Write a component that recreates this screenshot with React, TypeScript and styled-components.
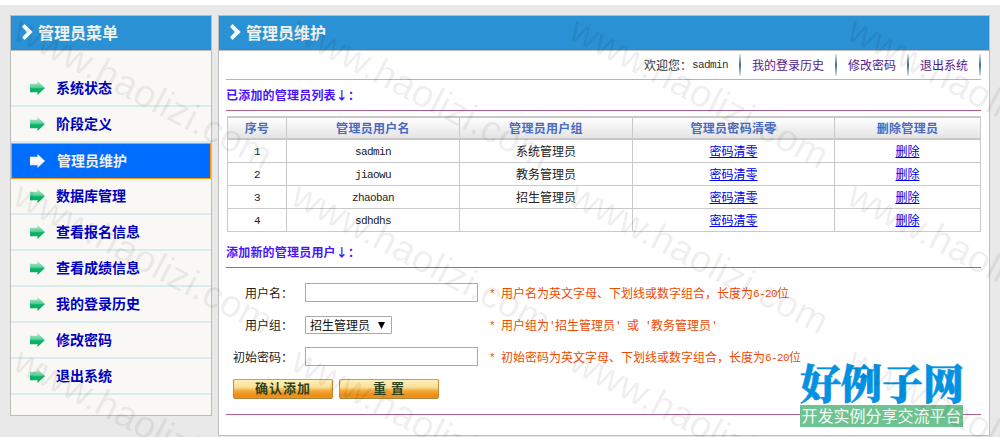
import React from 'react';
import styled, { createGlobalStyle, css } from 'styled-components';

const GlobalStyle = createGlobalStyle`
  * { box-sizing: border-box; }
  body {
    margin: 0;
    background: #fff;
    color: #222;
    font: 12px/16px "Noto Sans CJK SC", sans-serif;
    overflow: hidden;
  }
`;

const Page = styled.div`
  position: relative;
  width: 1000px;
  height: 437px;
  padding-top: 5px;
  overflow: hidden;
`;

const Body = styled.div`
  display: flex;
  align-items: flex-start;
  gap: 6px;
  height: 432px;
  padding: 10px;
  background: #e9e9e9;
`;

const Panel = styled.section<{ $width: number; $height: number; $bg: string }>`
  flex: none;
  width: ${(p) => p.$width}px;
  height: ${(p) => p.$height}px;
  border: 1px solid #bcbcbc;
  background: ${(p) => p.$bg};
`;

const PanelHeader = styled.h2`
  display: flex;
  align-items: center;
  gap: 5px;
  height: 35px;
  margin: 0;
  padding: 0 0 2px 11px;
  border-bottom: 1px solid #bcbcbc;
  background: #2a91d4;
  color: #f1f1ee;
  font-size: 16px;
  font-weight: 700;
`;

const Menu = styled.ul`
  margin: 0;
  padding: 20px 0 0;
  list-style: none;
`;

const MenuItem = styled.li<{ $active?: boolean }>`
  display: flex;
  align-items: center;
  gap: 11px;
  height: 36px;
  padding-left: 19px;
  border-bottom: 2px solid #d9eced;
  color: #0000bf;
  font-size: 14px;
  font-weight: 700;
  ${(p) =>
    p.$active &&
    css`
      padding: 0 0 0 18px;
      gap: 12px;
      border: 1px solid #ff9912;
      background: #006dfe;
      color: #f1f1f1;
    `}
`;

const MenuText = styled.span`
  padding-bottom: 2px;
`;

const Content = styled.div`
  padding: 0 8px 0 7px;
`;

const TopBar = styled.nav`
  display: flex;
  justify-content: flex-end;
  height: 29px;
  padding-top: 3px;
  border-bottom: 1px solid #dcbb2c;
`;

const TopItem = styled.span<{ $link?: boolean }>`
  display: flex;
  height: 22px;
  padding: 3px 0 0 11px;
  color: ${(p) => (p.$link ? '#551a8b' : '#333')};
  &::after {
    content: '';
    width: 2px;
    height: 22px;
    margin: -3px 0 0 11px;
    background: linear-gradient(#dce8ef, #3b7192 50%, #dce8ef);
  }
`;

const Mono = styled.span`
  font-family: "Liberation Mono", monospace;
  font-size: 11px;
  line-height: 1;
  letter-spacing: -0.6px;
  vertical-align: 1px;
  white-space: pre;
`;

const Account = styled(Mono)`
  line-height: 16px;
`;

const Heading = styled.h3<{ $height: number; $top: number }>`
  height: ${(p) => p.$height}px;
  margin: 0;
  padding-top: ${(p) => p.$top}px;
  border-bottom: 1px solid #b16088;
  color: #4a14ff;
  font-size: 12px;
  font-weight: 700;
  line-height: 16px;
  letter-spacing: 0.2px;
`;

const Grid = styled.div`
  margin: 5px 0 0 1px;
  border-left: 1px solid #c9c9c9;
`;

const Row = styled.div<{ $head?: boolean }>`
  display: grid;
  grid-template-columns: 59px 173px 173px 202px 146px;
  height: 23px;
  border-bottom: 1px solid #c9c9c9;
  text-align: center;
  line-height: 22px;
  ${(p) =>
    p.$head &&
    css`
      height: 24px;
      border-top: 2px solid #c9c9c9;
      border-bottom-width: 2px;
      background: linear-gradient(#fff, #e5e3e4);
      color: #486ac0;
      font-weight: 700;
      line-height: 20px;
      letter-spacing: 0.3px;
    `}
`;

const Cell = styled.div`
  border-right: 1px solid #c9c9c9;
`;

const Link = styled.a`
  color: #0000ee;
  text-decoration: underline;
`;

const Form = styled.form`
  height: 147px;
  padding: 9px 0 0 7px;
  border-bottom: 1px solid #b16088;
`;

const Field = styled.div`
  display: flex;
  align-items: center;
  height: 32px;
`;

const Label = styled.label`
  width: 72px;
  padding-right: 12px;
  text-align: right;
  white-space: nowrap;
`;

const Control = styled.div`
  display: flex;
  width: 184px;
`;

const Input = styled.input`
  width: 173px;
  height: 19px;
  margin-bottom: 1px;
  border: 1px solid #a9a9a9;
  padding: 0 3px;
  background: #fff;
  outline: 0;
`;

const Select = styled.div`
  display: flex;
  align-items: center;
  justify-content: space-between;
  width: 87px;
  height: 18px;
  padding: 0 6px 0 4px;
  border: 1px solid #a9a9a9;
  border-radius: 1px;
  color: #111;
`;

const Hint = styled.span`
  color: #ee4a00;
  white-space: nowrap;
`;

const Actions = styled.div`
  display: flex;
  gap: 6px;
  padding-top: 6px;
`;

const Button = styled.button`
  width: 100px;
  height: 20px;
  padding: 0 0 3px;
  border: 1px solid #c98a30;
  border-top-color: #8fae98;
  border-bottom-color: #a98443;
  border-radius: 2px;
  background: linear-gradient(#fff0b5 0%, #fbdf97 40%, #f3a93b 60%, #ee8d14 85%, #f0951d 100%);
  color: #2c4420;
  font: 700 13px/15px "Noto Sans CJK SC", sans-serif;
  letter-spacing: 1px;
  white-space: pre;
`;

const Brand = styled.div`
  position: absolute;
  left: 800px;
  top: 361px;
  width: 163px;
`;

const BrandName = styled.div`
  height: 44px;
  color: #0391e2;
  font: 900 41px/41px "Noto Serif CJK SC", "Noto Sans CJK SC", serif;
  white-space: nowrap;
  -webkit-text-stroke: 0.6px #0391e2;
`;

const BrandSlogan = styled.div`
  height: 22px;
  background: #6fc292;
  color: #f1fbf4;
  font-size: 16px;
  line-height: 20px;
  text-align: center;
  white-space: nowrap;
`;

const Overlay = styled.svg`
  position: absolute;
  inset: 0;
  pointer-events: none;
`;

const Chevron = () => (
  <svg width="11" height="16" viewBox="0 0 11 16">
    <path d="M2.5 0 10.8 8 2.5 16 0 13.2 4.8 8 0 2.8z" fill="#f0fcff" />
  </svg>
);

const Arrow = ({ active }: { active?: boolean }) => (
  <svg width="15" height="14" viewBox="0 0 15 14">
    <defs>
      <linearGradient id={active ? 'arrowOn' : 'arrowOff'} x1="0" y1="0" x2="0" y2="1">
        <stop offset="0.1" stopColor={active ? '#fff' : '#a6e3c8'} />
        <stop offset="0.45" stopColor={active ? '#fff' : '#5ccd9a'} />
        <stop offset="0.55" stopColor={active ? '#f2f5fa' : '#08b667'} />
        <stop offset="1" stopColor={active ? '#dfe8f5' : '#0aa862'} />
      </linearGradient>
    </defs>
    <path d="M0 2.8h7.5V0L15 7l-7.5 7v-2.8H0z" fill={`url(#${active ? 'arrowOn' : 'arrowOff'})`} />
  </svg>
);

const menu = ['系统状态', '阶段定义', '管理员维护', '数据库管理', '查看报名信息', '查看成绩信息', '我的登录历史', '修改密码', '退出系统'];
const users = [
  ['sadmin', '系统管理员'],
  ['jiaowu', '教务管理员'],
  ['zhaoban', '招生管理员'],
  ['sdhdhs', ''],
];
const columns = ['序号', '管理员用户名', '管理员用户组', '管理员密码清零', '删除管理员'];
const markX = [0, 278, 556, 834];
const markY = [0, 165.5, 331];

export default function App() {
  return (
    <Page>
      <GlobalStyle />
      <Body>
        <Panel $width={202} $height={401} $bg="#f9f8f5">
          <PanelHeader><Chevron />管理员菜单</PanelHeader>
          <Menu>
            {menu.map((name, i) => (
              <MenuItem key={name} $active={i === 2}>
                <Arrow active={i === 2} />
                <MenuText>{name}</MenuText>
              </MenuItem>
            ))}
          </Menu>
        </Panel>
        <Panel $width={772} $height={421} $bg="#fff">
          <PanelHeader><Chevron />管理员维护</PanelHeader>
          <Content>
            <TopBar>
              <TopItem>欢迎您：<Account>sadmin</Account></TopItem>
              <TopItem $link>我的登录历史</TopItem>
              <TopItem $link>修改密码</TopItem>
              <TopItem $link>退出系统</TopItem>
            </TopBar>
            <Heading $height={31} $top={7}>已添加的管理员列表↓：</Heading>
            <Grid>
              <Row $head>{columns.map((c) => <Cell key={c}>{c}</Cell>)}</Row>
              {users.map(([user, group], i) => (
                <Row key={user}>
                  <Cell><Mono>{i + 1}</Mono></Cell>
                  <Cell><Mono>{user}</Mono></Cell>
                  <Cell>{group}</Cell>
                  <Cell><Link>密码清零</Link></Cell>
                  <Cell><Link>删除</Link></Cell>
                </Row>
              ))}
            </Grid>
            <Heading $height={36} $top={12}>添加新的管理员用户↓：</Heading>
            <Form>
              <Field>
                <Label>用户名：</Label>
                <Control><Input /></Control>
                <Hint><Mono>* </Mono>用户名为英文字母、下划线或数字组合，长度为<Mono>6-20</Mono>位</Hint>
              </Field>
              <Field>
                <Label>用户组：</Label>
                <Control>
                  <Select>
                    招生管理员
                    <svg width="7" height="7" viewBox="0 0 7 7"><path d="M0 0h7L3.5 7z" fill="#000" /></svg>
                  </Select>
                </Control>
                <Hint><Mono>* </Mono>用户组为<Mono>'</Mono>招生管理员<Mono>' </Mono>或<Mono> '</Mono>教务管理员<Mono>'</Mono></Hint>
              </Field>
              <Field>
                <Label>初始密码：</Label>
                <Control><Input type="password" /></Control>
                <Hint><Mono>* </Mono>初始密码为英文字母、下划线或数字组合，长度为<Mono>6-20</Mono>位</Hint>
              </Field>
              <Actions>
                <Button type="button">确认添加</Button>
                <Button type="button">重 置</Button>
              </Actions>
            </Form>
          </Content>
        </Panel>
      </Body>
      <Brand>
        <BrandName>好例子网</BrandName>
        <BrandSlogan>开发实例分享交流平台</BrandSlogan>
      </Brand>
      <Overlay width="1000" height="437">
        {markY.map((y) =>
          markX.map((x) => (
            <text
              key={`${x}-${y}`}
              transform={`translate(${x + 11} ${y + 38}) rotate(27.5)`}
              fontFamily="Liberation Sans, sans-serif"
              fontSize="38"
              textLength="285"
              fill="#000"
              fillOpacity="0.08"
            >
              www.haolizi.com
            </text>
          )),
        )}
      </Overlay>
    </Page>
  );
}
